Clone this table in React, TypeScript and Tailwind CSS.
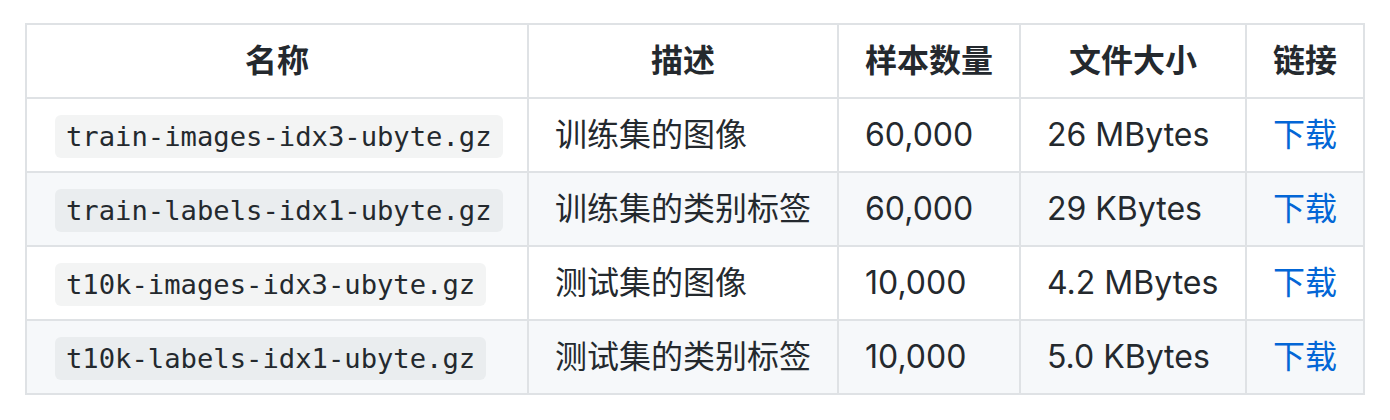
const rows = [
  { file: "train-images-idx3-ubyte.gz", desc: "训练集的图像", count: "60,000", size: "26 MBytes" },
  { file: "train-labels-idx1-ubyte.gz", desc: "训练集的类别标签", count: "60,000", size: "29 KBytes" },
  { file: "t10k-images-idx3-ubyte.gz", desc: "测试集的图像", count: "10,000", size: "4.2 MBytes" },
  { file: "t10k-labels-idx1-ubyte.gz", desc: "测试集的类别标签", count: "10,000", size: "5.0 KBytes" },
];

const headers = ["名称", "描述", "样本数量", "文件大小", "链接"];

const cell = "border-r-2 border-b-2 border-[#dfe2e5] px-[26px] py-[12px] leading-[48px] whitespace-nowrap overflow-hidden";

export default function App() {
  return (
    <div className="min-h-[420px] bg-white pl-[25px] pt-[23px] text-[#24292e] text-[32px] font-['Inter','Noto_Sans_CJK_SC',sans-serif]">
      <div className="grid w-max grid-cols-[502px_310px_182px_226px_118px] auto-rows-[74px] border-t-2 border-l-2 border-[#dfe2e5]">
        {/* header row */}
        {headers.map((h) => (
          <div key={h} className={`${cell} text-center font-bold`}>
            {h}
          </div>
        ))}

        {/* body rows */}
        {rows.map((r, i) => {
          const bg = i % 2 === 1 ? "bg-[#f6f8fa]" : "bg-white";
          return (
            <div key={r.file} className="contents">
              <div className={`${cell} ${bg}`}>
                <code className="ml-[2px] rounded-[6px] bg-[rgba(27,31,35,0.05)] px-[11px] py-[6px] text-[27.2px] font-['DejaVu_Sans_Mono',monospace]">
                  {r.file}
                </code>
              </div>
              <div className={`${cell} ${bg}`}>{r.desc}</div>
              <div className={`${cell} ${bg}`}>{r.count}</div>
              <div className={`${cell} ${bg}`}>{r.size}</div>
              <div className={`${cell} ${bg}`}>
                <a href="#" className="text-[#0366d6]">下载</a>
              </div>
            </div>
          );
        })}
      </div>
    </div>
  );
}
